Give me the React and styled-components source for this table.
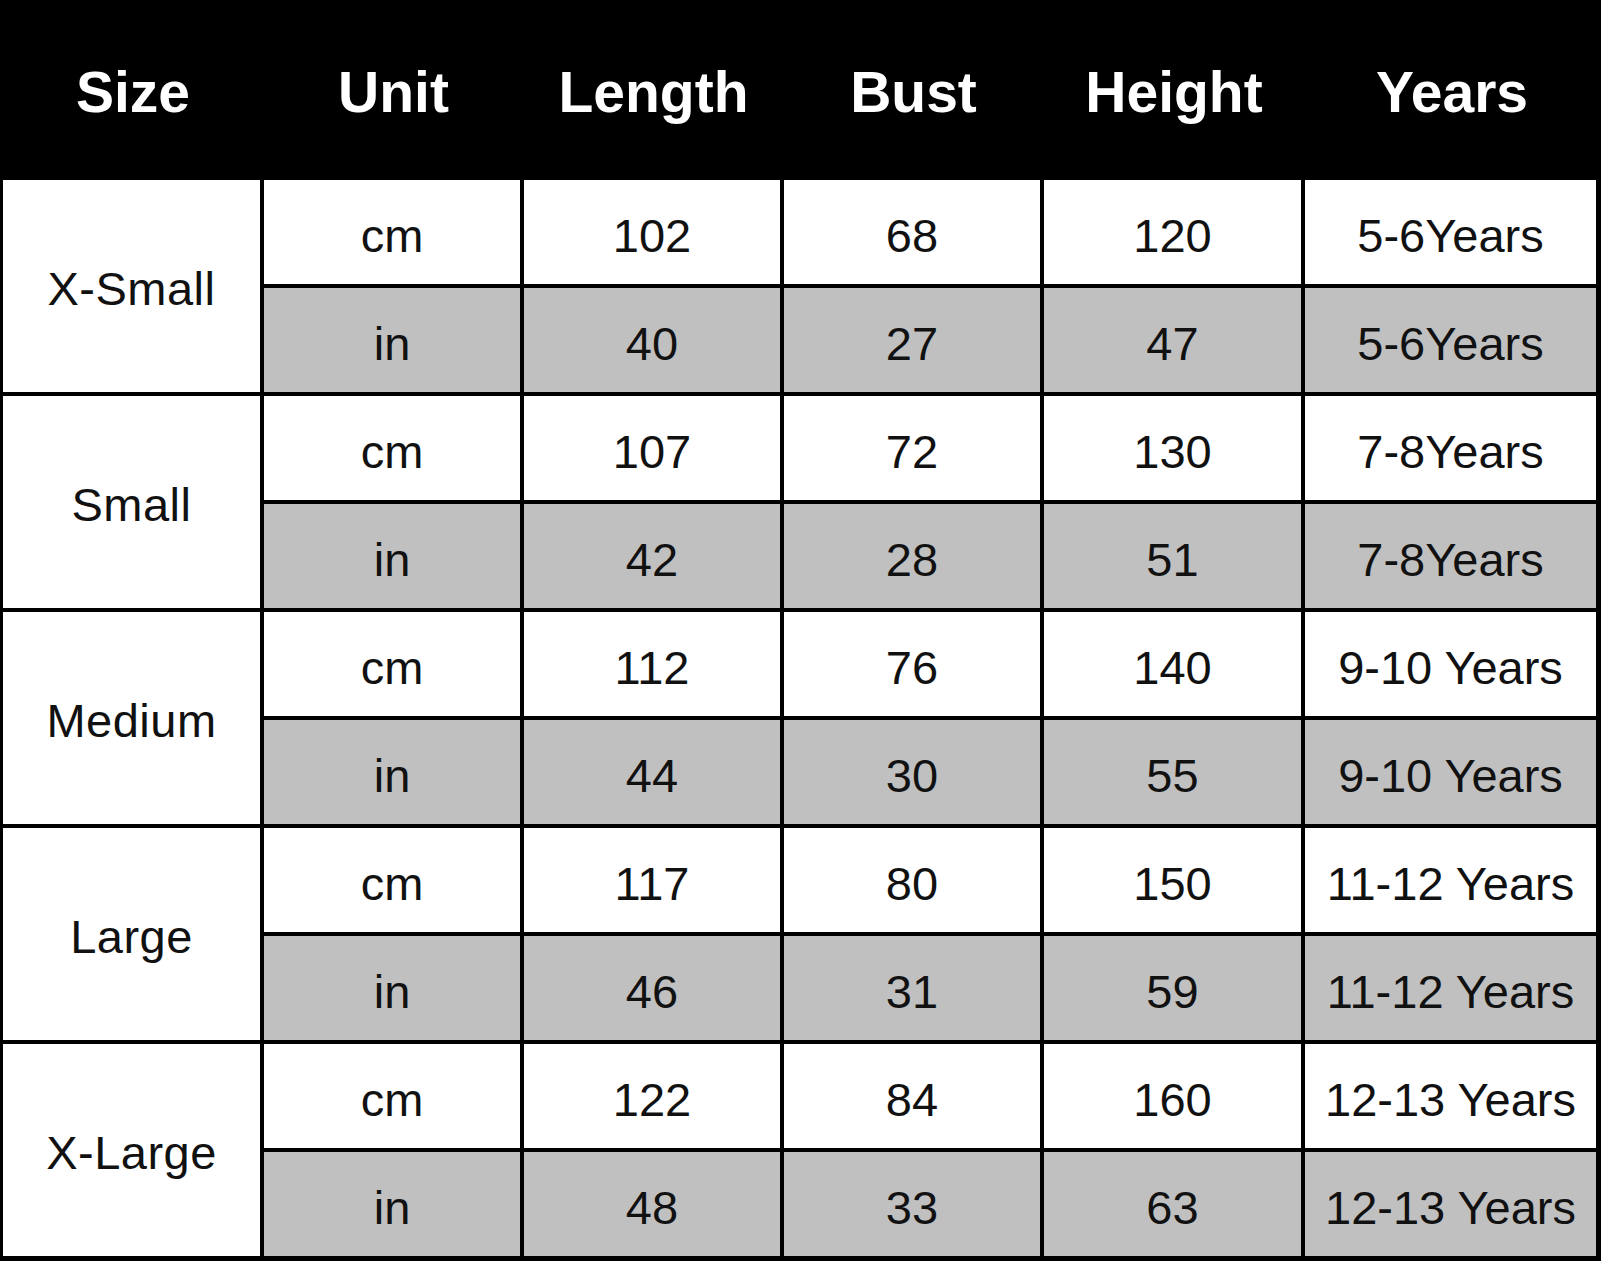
import React from "react"
import styled, { createGlobalStyle } from "styled-components"

const GlobalStyle = createGlobalStyle`
  html, body {
    margin: 0;
    padding: 0;
    background: #000;
  }
  body {
    font-family: "Liberation Sans", Arial, sans-serif;
  }
`

/**
 * Chart grid: black background shows through the gaps as the cell borders.
 */
const Chart = styled.div`
  display: grid;
  grid-template-columns: 257px 256px 256px 256px 257px 291px;
  grid-template-rows: 176px repeat(10, 104px);
  column-gap: 4px;
  row-gap: 4px;
  width: 1601px;
  box-sizing: border-box;
  padding: 0 5px 5px 3px;
  background: #000;
`

const HeadCell = styled.div`
  display: flex;
  align-items: center;
  justify-content: center;
  padding-top: 7px;
  padding-left: 3px;
  background: #000;
  color: #fff;
  font-weight: bold;
  font-size: 57px;
`

const Cell = styled.div`
  display: flex;
  align-items: center;
  justify-content: center;
  padding-top: 6px;
  box-sizing: border-box;
  background: ${(p) => (p.shaded ? "#c0c0c0" : "#fff")};
  color: #111;
  font-size: 47px;
`

const SizeCell = styled(Cell)`
  grid-row: span 2;
  padding-top: 4px;
  background: #fff;
  letter-spacing: 0.5px;
`

const headers = ["Size", "Unit", "Length", "Bust", "Height", "Years"]

const sizes = [
  { name: "X-Small", cm: ["102", "68", "120"], inch: ["40", "27", "47"], years: ["5-6Years", "5-6Years"] },
  { name: "Small", cm: ["107", "72", "130"], inch: ["42", "28", "51"], years: ["7-8Years", "7-8Years"] },
  { name: "Medium", cm: ["112", "76", "140"], inch: ["44", "30", "55"], years: ["9-10 Years", "9-10 Years"] },
  { name: "Large", cm: ["117", "80", "150"], inch: ["46", "31", "59"], years: ["11-12 Years", "11-12 Years"] },
  { name: "X-Large", cm: ["122", "84", "160"], inch: ["48", "33", "63"], years: ["12-13 Years", "12-13 Years"] },
]

const App = () => {
  return (
    <>
      <GlobalStyle />
      <Chart>
        {headers.map((h) => (
          <HeadCell key={h}>{h}</HeadCell>
        ))}
        {sizes.map((s) => (
          <React.Fragment key={s.name}>
            <SizeCell>{s.name}</SizeCell>
            <Cell>cm</Cell>
            {s.cm.map((v, i) => (
              <Cell key={"cm" + i}>{v}</Cell>
            ))}
            <Cell>{s.years[0]}</Cell>
            <Cell shaded>in</Cell>
            {s.inch.map((v, i) => (
              <Cell shaded key={"in" + i}>{v}</Cell>
            ))}
            <Cell shaded>{s.years[1]}</Cell>
          </React.Fragment>
        ))}
      </Chart>
    </>
  )
}

export default App
